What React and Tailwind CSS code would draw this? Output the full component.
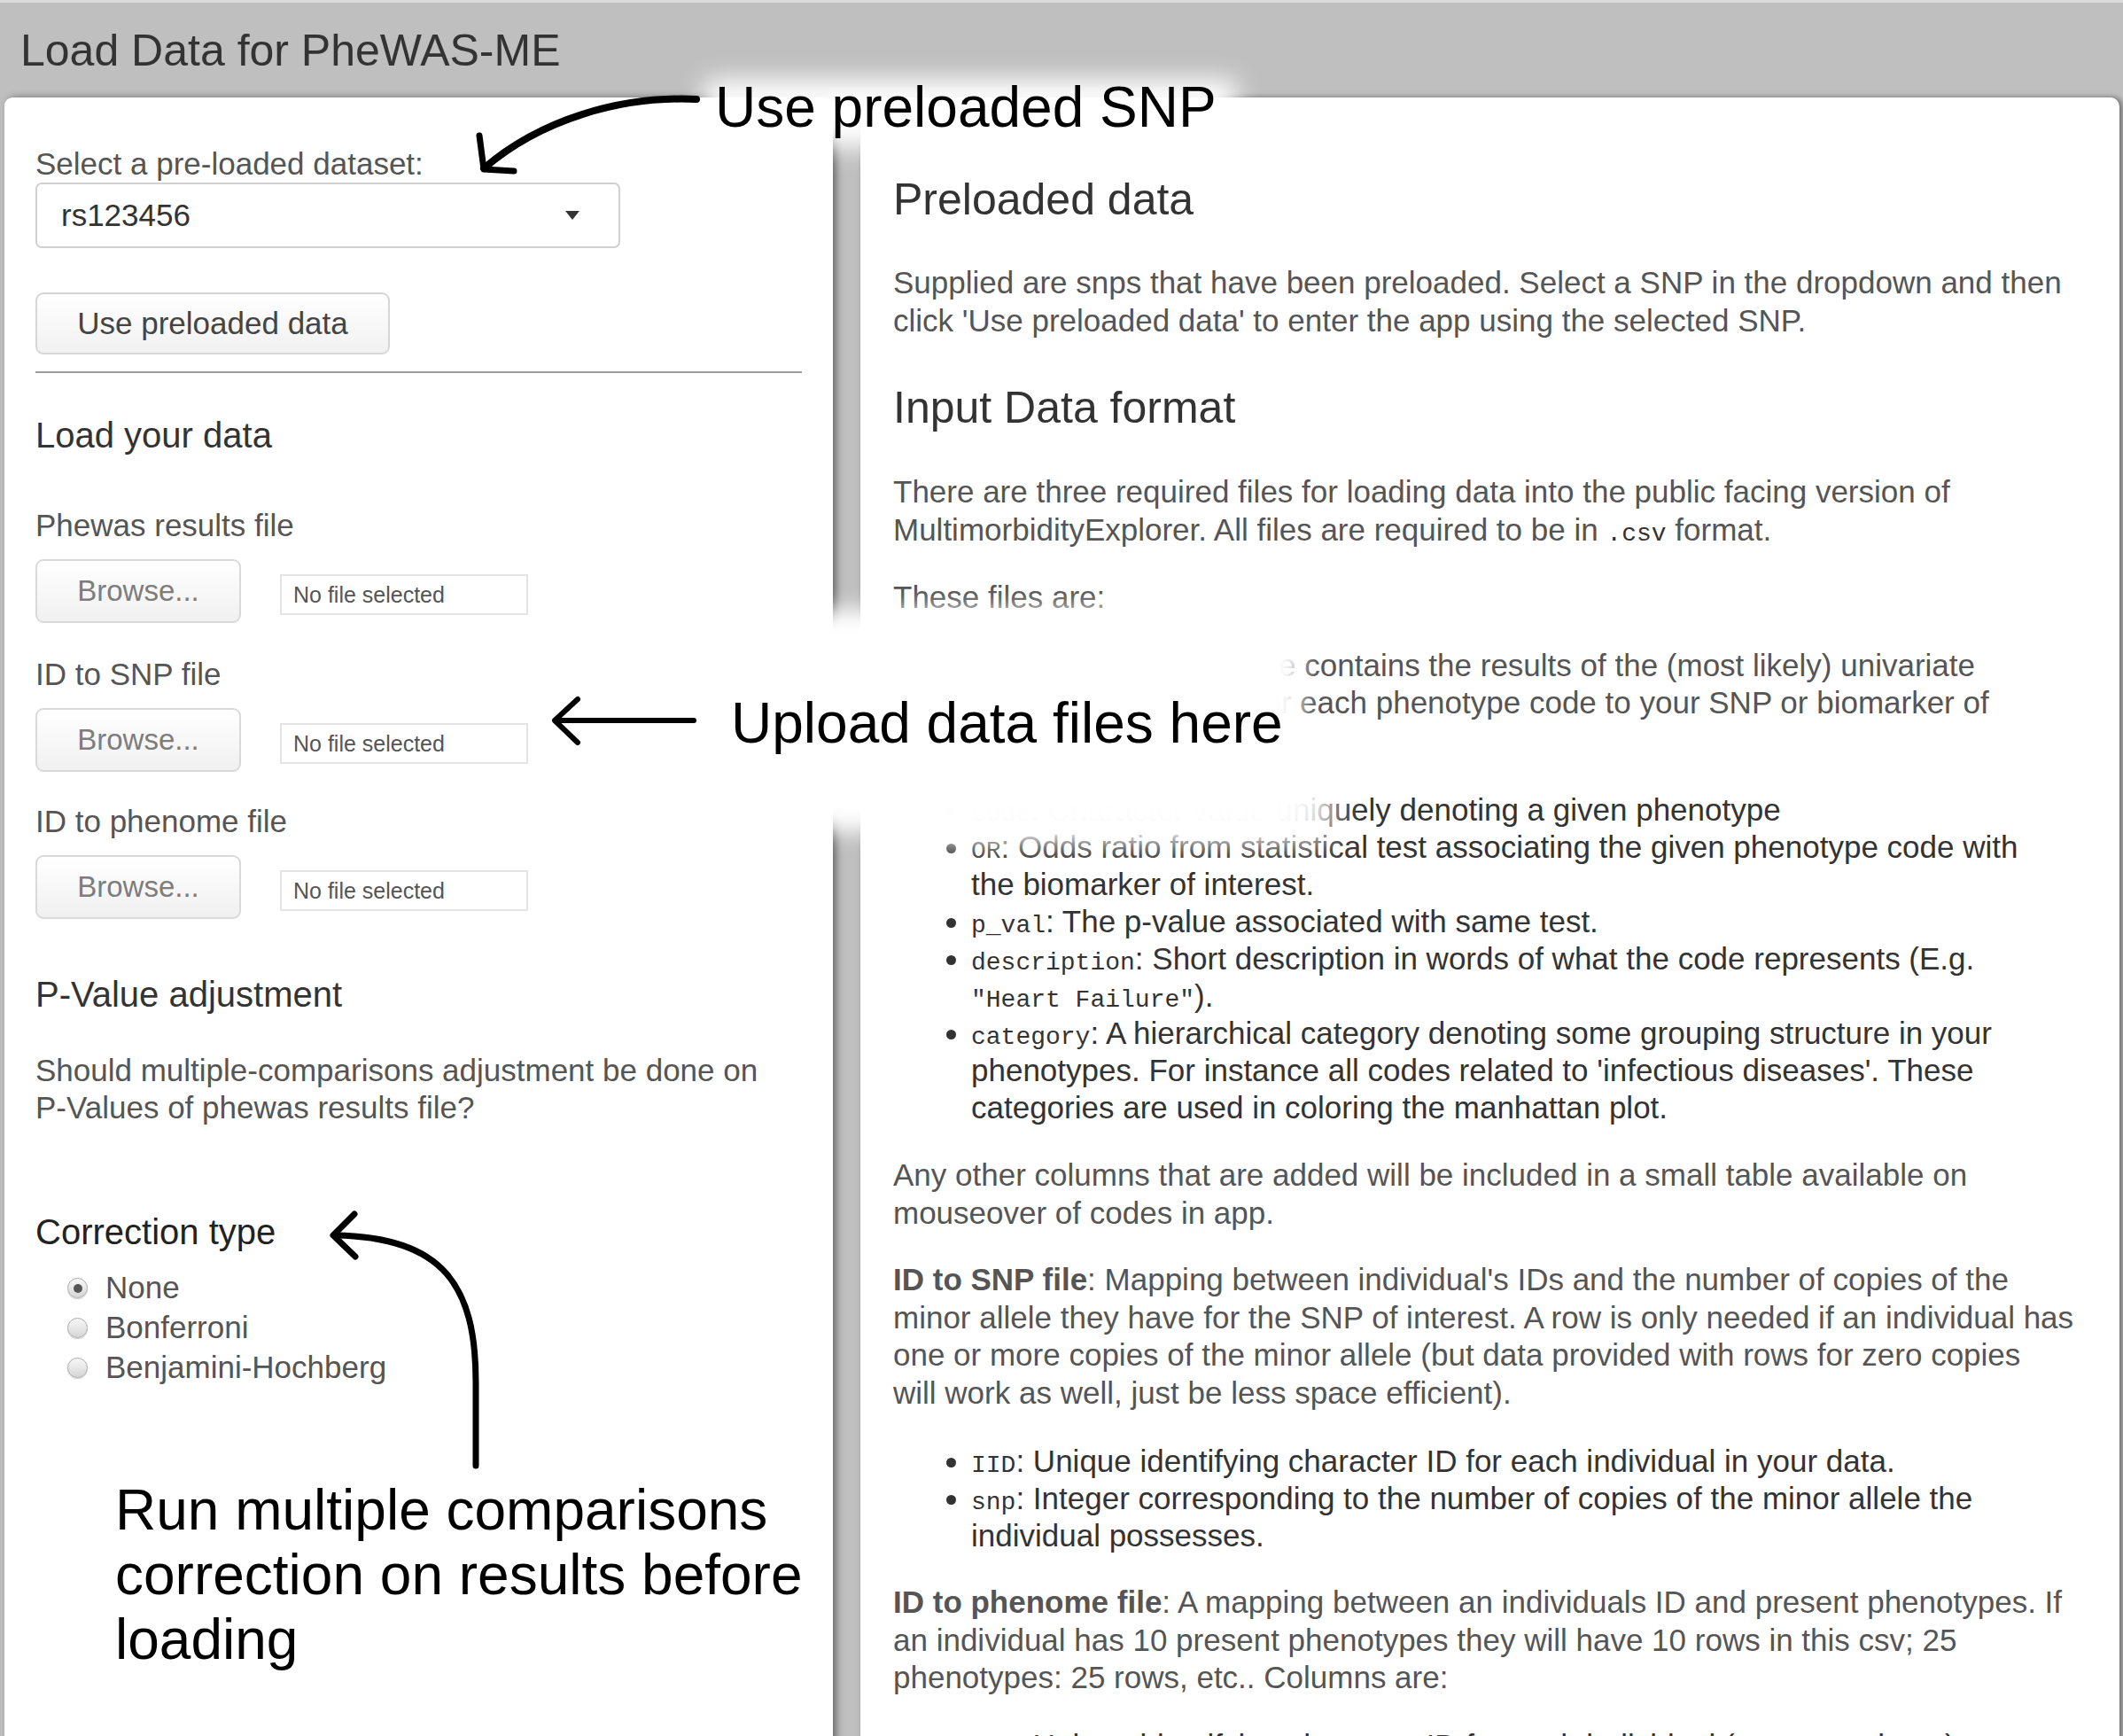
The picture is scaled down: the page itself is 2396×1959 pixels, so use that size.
import React from "react";

const FileInput = ({ label, className }) => (
  <div className={className}>
    <div className="text-[35px] leading-[42px] text-[#555]">{label}</div>
    <div className="mt-[17px] flex items-start gap-[44px]">
      <button className="h-[72px] w-[232px] rounded-[9px] border-2 border-[#d9d9d9] bg-gradient-to-b from-white to-[#f0f0f0] text-[33px] text-[#7d7d7d]">
        Browse...
      </button>
      <div className="mt-[17px] h-[46px] w-[280px] border-2 border-[#e3e3e3] pl-[13px] text-[25px] leading-[42px] text-[#555]">
        No file selected
      </div>
    </div>
  </div>
);

const Radio = ({ checked, label }) => (
  <label className="flex h-[45px] items-center gap-[20px] pl-[36px] text-[35px] text-[#555]">
    <span className="flex h-[23px] w-[23px] items-center justify-center rounded-full border border-[#adadad] bg-gradient-to-b from-[#f8f8f8] to-[#d6d6d6] shadow-[0_1px_1px_rgba(0,0,0,0.2)]">
      {checked && <span className="h-[10px] w-[10px] rounded-full bg-[#555]" />}
    </span>
    {label}
  </label>
);

const Code = ({ children }) => (
  <code className="font-['Liberation_Mono',monospace] text-[28px] leading-none text-[#333]">{children}</code>
);

export default function App() {
  return (
    <div className="relative h-[1959px] w-[2396px] overflow-hidden bg-[#bfbfbf] font-['Liberation_Sans',Arial,sans-serif]">
      {/* header */}
      <div className="flex h-[110px] items-center border-t-[3px] border-[#dadada] pl-[23px]">
        <h1 className="text-[50px] leading-[60px] text-[#333]">Load Data for PheWAS-ME</h1>
      </div>

      <div className="flex h-[1900px] gap-[31px] pl-[5px] pr-[4px]">
        {/* sidebar */}
        <div className="w-[935px] rounded-t-[9px] bg-white px-[35px] pt-[54px] shadow-[4px_0_9px_rgba(0,0,0,0.45)]">
          <div className="text-[35px] leading-[42px] text-[#555]">Select a pre-loaded dataset:</div>
          <div className="flex h-[74px] w-[660px] items-center justify-between rounded-[7px] border-2 border-[#d0d0d0] pl-[27px] pr-[44px]">
            <span className="text-[35px] text-[#333]">rs123456</span>
            <svg width="16" height="10" viewBox="0 0 16 10">
              <polygon points="0,0 16,0 8,10" fill="#333" />
            </svg>
          </div>
          <button className="mt-[50px] h-[70px] w-[400px] rounded-[9px] border-2 border-[#d6d6d6] bg-gradient-to-b from-white to-[#f1f1f1] text-[35px] text-[#444]">
            Use preloaded data
          </button>
          <div className="mt-[19px] h-[2px] bg-[#9c9c9c]" />

          <h3 className="mt-[46px] text-[40px] leading-[48px] text-[#333]">Load your data</h3>
          <FileInput label="Phewas results file" className="mt-[57px]" />
          <FileInput label="ID to SNP file" className="mt-[37px]" />
          <FileInput label="ID to phenome file" className="mt-[35px]" />

          <h3 className="mt-[61px] text-[40px] leading-[48px] text-[#333]">P-Value adjustment</h3>
          <p className="mt-[41px] text-[35px] leading-[42px] text-[#555]">
            Should multiple-comparisons adjustment be done on
            <br />
            P-Values of phewas results file?
          </p>

          <h3 className="mt-[95px] text-[40px] leading-[48px] text-[#222]">Correction type</h3>
          <div className="mt-[17px]">
            <Radio checked label="None" />
            <Radio label="Bonferroni" />
            <Radio label="Benjamini-Hochberg" />
          </div>
        </div>

        {/* main panel */}
        <div className="flex-1 rounded-t-[10px] bg-white pl-[37px] pr-[20px] pt-[85px] shadow-[3px_0_6px_rgba(0,0,0,0.45)]">
          <h2 className="text-[50px] leading-[60px] text-[#333]">Preloaded data</h2>
          <p className="mt-[43px] text-[35px] leading-[42.5px] text-[#555]">
            Supplied are snps that have been preloaded. Select a SNP in the dropdown and then
            <br />
            click 'Use preloaded data' to enter the app using the selected SNP.
          </p>

          <h2 className="mt-[47px] text-[50px] leading-[60px] text-[#333]">Input Data format</h2>
          <p className="mt-[44px] text-[35px] leading-[42.5px] text-[#555]">
            There are three required files for loading data into the public facing version of
            <br />
            MultimorbidityExplorer. All files are required to be in <Code>.csv</Code> format.
          </p>
          <p className="mt-[34px] text-[35px] leading-[42.5px] text-[#555]">These files are:</p>
          <p className="mt-[34px] text-[35px] leading-[42.5px] text-[#555]">
            <b>Phewas results file</b>: This file contains the results of the (most likely) univariate
            <br />
            statistical tests conducted for each phenotype code to your SNP or biomarker of
            <br />
            interest. Columns are:
          </p>
          <ul className="mt-[36px] list-disc pl-[88px] text-[35px] leading-[42px] text-[#333]">
            <li>
              <Code>code</Code>: Character value uniquely denoting a given phenotype
            </li>
            <li>
              <Code>OR</Code>: Odds ratio from statistical test associating the given phenotype code with
              <br />
              the biomarker of interest.
            </li>
            <li>
              <Code>p_val</Code>: The p-value associated with same test.
            </li>
            <li>
              <Code>description</Code>: Short description in words of what the code represents (E.g.
              <br />
              <Code>"Heart Failure"</Code>).
            </li>
            <li>
              <Code>category</Code>: A hierarchical category denoting some grouping structure in your
              <br />
              phenotypes. For instance all codes related to 'infectious diseases'. These
              <br />
              categories are used in coloring the manhattan plot.
            </li>
          </ul>
          <p className="mt-[34px] text-[35px] leading-[42.5px] text-[#555]">
            Any other columns that are added will be included in a small table available on
            <br />
            mouseover of codes in app.
          </p>
          <p className="mt-[33px] text-[35px] leading-[42.5px] text-[#555]">
            <b>ID to SNP file</b>: Mapping between individual's IDs and the number of copies of the
            <br />
            minor allele they have for the SNP of interest. A row is only needed if an individual has
            <br />
            one or more copies of the minor allele (but data provided with rows for zero copies
            <br />
            will work as well, just be less space efficient).
          </p>
          <ul className="mt-[35px] list-disc pl-[88px] text-[35px] leading-[42px] text-[#333]">
            <li>
              <Code>IID</Code>: Unique identifying character ID for each individual in your data.
            </li>
            <li>
              <Code>snp</Code>: Integer corresponding to the number of copies of the minor allele the
              <br />
              individual possesses.
            </li>
          </ul>
          <p className="mt-[33px] text-[35px] leading-[42.5px] text-[#555]">
            <b>ID to phenome file</b>: A mapping between an individuals ID and present phenotypes. If
            <br />
            an individual has 10 present phenotypes they will have 10 rows in this csv; 25
            <br />
            phenotypes: 25 rows, etc.. Columns are:
          </p>
          <ul className="mt-[34px] list-disc pl-[88px] text-[35px] leading-[42px] text-[#333]">
            <li>
              <Code>IID</Code>: Unique identifying character ID for each individual (same as above).
            </li>
          </ul>
        </div>
      </div>

      {/* white halos behind the annotations */}
      <div className="absolute left-[795px] top-[90px] h-[76px] w-[600px] bg-white blur-[14px]" />
      <div className="absolute left-[880px] top-[688px] h-[250px] w-[588px] bg-white blur-[12px]" />
      <div className="absolute left-[1000px] top-[860px] h-[90px] w-[505px] bg-white opacity-90 blur-[16px]" />

      {/* arrows */}
      <svg
        className="pointer-events-none absolute left-0 top-0"
        width="2396"
        height="1959"
        viewBox="0 0 2396 1959"
        fill="none"
        stroke="#000"
        strokeLinecap="round"
        strokeLinejoin="round"
      >
        <path d="M786 112 C700 108 610 135 546 190" strokeWidth="8" />
        <path d="M541 153 L546 191 L580 193" strokeWidth="7" />
        <path d="M783 813 L627 813" strokeWidth="6" />
        <path d="M652 789 L626 813 L652 838" strokeWidth="6" />
        <path d="M537 1654 L537 1560 C537 1450 500 1396 378 1394" strokeWidth="7" />
        <path d="M400 1370 L376 1394 L401 1418" strokeWidth="7" />
      </svg>

      {/* annotation labels */}
      <div className="absolute left-[807px] top-[89px] text-[64px] leading-[64px] text-black">Use preloaded SNP</div>
      <div className="absolute left-[825px] top-[784px] text-[64px] leading-[64px] text-black">Upload data files here</div>
      <div className="absolute left-[130px] top-[1668px] text-[64px] leading-[73px] text-black">
        Run multiple comparisons
        <br />
        correction on results before
        <br />
        loading
      </div>
    </div>
  );
}
